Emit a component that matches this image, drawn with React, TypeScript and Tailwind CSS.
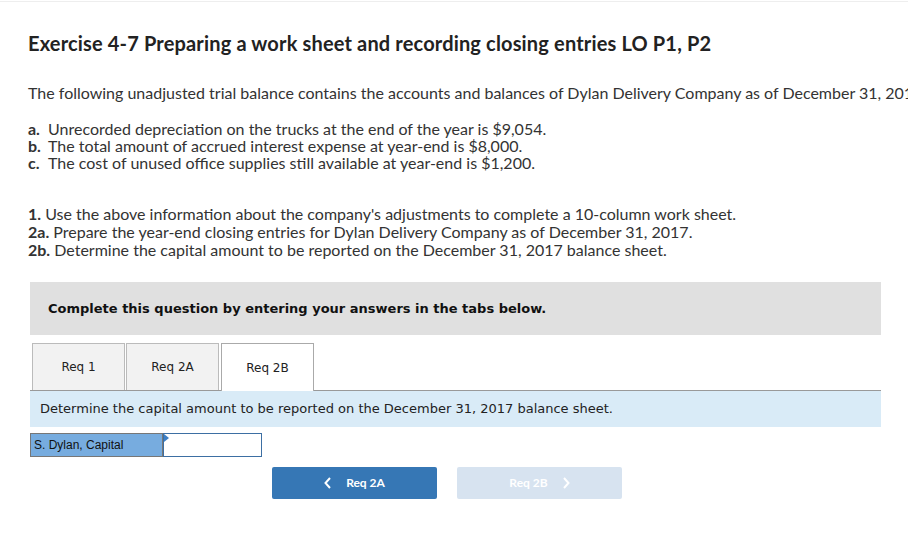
import React from "react";

const body = "font-['Lato',sans-serif]";
const verdana = "font-['DejaVu_Sans',Verdana,sans-serif]";

function Chevron({ dir }: { dir: "left" | "right" }) {
  return (
    <svg width="8" height="12" viewBox="0 0 8 12" fill="none" stroke="currentColor" strokeWidth={2}>
      {dir === "left" ? <path d="M6 1L1.5 6L6 11" /> : <path d="M2 1L6.5 6L2 11" />}
    </svg>
  );
}

export default function App() {
  const tabs = ["Req 1", "Req 2A", "Req 2B"];
  const active = 2;

  return (
    <div className={`min-h-[538px] w-[908px] overflow-hidden bg-white text-[#333] ${body}`}>
      <div className="h-[2px] border-b border-[#eeeeee]" />
      <div className="pl-[28px]">
        <h1 className="mt-[30px] text-[20px] font-bold leading-[22px] tracking-[0.16px] text-[#222]">
          Exercise 4-7 Preparing a work sheet and recording closing entries LO P1, P2
        </h1>

        <p className="mt-[30px] whitespace-nowrap text-[16px] leading-[18px]">
          The following unadjusted trial balance contains the accounts and balances of Dylan Delivery Company as of December 31, 2017.
        </p>

        <ul className="mt-[18px] text-[16px] leading-[17px]">
          <li className="flex">
            <span className="w-[20px] font-bold">a.</span>
            <span>Unrecorded depreciation on the trucks at the end of the year is $9,054.</span>
          </li>
          <li className="flex">
            <span className="w-[20px] font-bold">b.</span>
            <span>The total amount of accrued interest expense at year-end is $8,000.</span>
          </li>
          <li className="flex">
            <span className="w-[20px] font-bold">c.</span>
            <span>The cost of unused office supplies still available at year-end is $1,200.</span>
          </li>
        </ul>

        <div className="mt-[34px] text-[16px] leading-[18px]">
          <p>
            <b>1.</b> Use the above information about the company's adjustments to complete a 10-column work sheet.
          </p>
          <p>
            <b>2a.</b> Prepare the year-end closing entries for Dylan Delivery Company as of December 31, 2017.
          </p>
          <p>
            <b>2b.</b> Determine the capital amount to be reported on the December 31, 2017 balance sheet.
          </p>
        </div>
      </div>

      <div className="ml-[30px] w-[851px]">
        <div className={`mt-[23px] flex h-[53px] items-center bg-[#e0e0e0] pl-[18px] text-[13px] font-bold text-[#111] ${verdana}`}>
          Complete this question by entering your answers in the tabs below.
        </div>

        <div className={`mt-[8px] flex items-end gap-[1px] border-b border-[#999] pl-[2px] ${verdana}`}>
          {tabs.map((t, i) => (
            <div
              key={t}
              className={
                i === active
                  ? "-mb-px ml-[1px] flex h-[48px] w-[93px] items-center justify-center border border-b-0 border-[#aaa] bg-white text-[12px] text-[#222]"
                  : "flex h-[47px] w-[93px] items-center justify-center border border-b-0 border-[#bbb] bg-[#f2f2f2] text-[12px] text-[#222]"
              }
            >
              {t}
            </div>
          ))}
        </div>

        <div className={`flex h-[36px] items-center bg-[#d9ebf7] pl-[10px] text-[13px] text-[#222] ${verdana}`}>
          Determine the capital amount to be reported on the December 31, 2017 balance sheet.
        </div>

        <div className="mt-[6px] flex h-[24px]">
          <div className="flex w-[133px] items-center border border-[#777] bg-[#77acdf] pl-[3px] font-['Liberation_Sans',Arial,sans-serif] text-[12px] text-[#111]">
            S. Dylan, Capital
          </div>
          <div className="relative w-[99px] border border-[#3d6fa3] bg-white">
            <span className="absolute left-0 top-0 h-0 w-0 border-b-[4px] border-l-[5px] border-t-[4px] border-b-transparent border-l-[#3d7fc6] border-t-transparent" />
          </div>
        </div>

        <div className="mt-[10px] flex gap-[20px] pl-[242px]">
          <button className="flex h-[32px] w-[165px] items-center justify-center gap-[14px] rounded-[2px] bg-[#3677b5] text-[12px] font-bold text-white">
            <Chevron dir="left" />
            <span>Req 2A</span>
          </button>
          <button className="flex h-[32px] w-[165px] items-center justify-center gap-[14px] rounded-[2px] bg-[#d7e3f0] text-[12px] font-bold text-white">
            <span>Req 2B</span>
            <Chevron dir="right" />
          </button>
        </div>
      </div>
    </div>
  );
}
